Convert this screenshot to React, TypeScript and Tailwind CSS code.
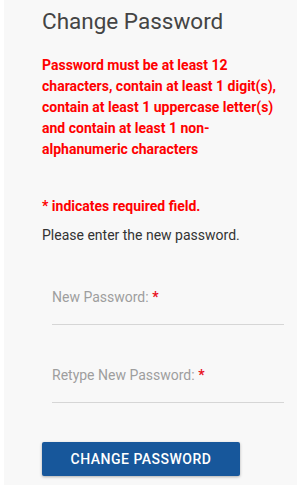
import React from 'react';

function Field({ label }: { label: string }) {
  return (
    <div className="ml-[10px] mr-[1px] border-b border-[#d6d6d6] pb-[17px]">
      <label className="block text-[14px] leading-[20px] text-[#9e9e9e]">
        {label} <span className="font-bold text-[#e8101e]">*</span>
      </label>
    </div>
  );
}

export default function App() {
  return (
    <div className="h-[485px] w-[297px] overflow-hidden bg-white" style={{ fontFamily: 'Roboto, "Liberation Sans", sans-serif' }}>
      <div className="ml-[4px] h-full bg-[#f8f8f8] pl-[38px] pr-[12px]">
        <h1 className="pt-[7px] text-[22.5px] leading-[28px] text-[#444]">Change Password</h1>

        <p className="mt-[20px] text-[14px] font-bold leading-[21px] text-[#f00]">
          Password must be at least 12 characters, contain at least 1 digit(s), contain at least 1 uppercase letter(s) and contain at least 1 non-alphanumeric characters
        </p>

        <p className="mt-[36px] text-[14px] font-bold leading-[21px] text-[#f00]">* indicates required field.</p>
        <p className="mt-[8px] text-[14px] leading-[21px] text-[#333]">Please enter the new password.</p>

        <div className="mt-[41px] flex flex-col gap-[40px]">
          <Field label="New Password:" />
          <Field label="Retype New Password:" />
        </div>

        <button className="mt-[39px] h-[34px] w-[198px] rounded-[2px] bg-[#17579b] text-[14px] font-medium tracking-[0.5px] text-white shadow-[0_1px_3px_rgba(0,0,0,0.3)]">
          CHANGE PASSWORD
        </button>
      </div>
    </div>
  );
}
